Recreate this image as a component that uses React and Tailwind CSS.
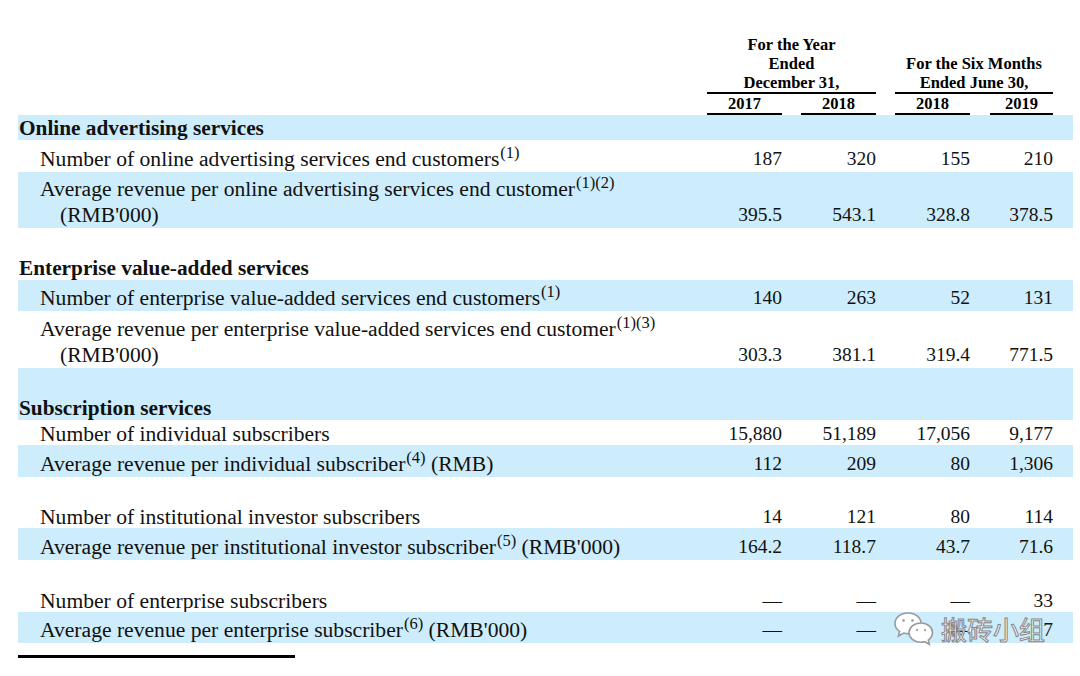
const serif = { fontFamily: '"Liberation Serif", "Times New Roman", serif' };

const Sup = ({ children }) => (
  <sup className="text-[16.5px] -top-[8px] ml-[1px]">{children}</sup>
);

const Values = ({ values }) => (
  <div className="flex text-[19.5px] pr-[20px]">
    <div className="w-[94px] text-right">{values[0]}</div>
    <div className="w-[94px] text-right">{values[1]}</div>
    <div className="w-[94px] text-right">{values[2]}</div>
    <div className="w-[83px] text-right">{values[3]}</div>
  </div>
);

const Row = ({ blue, h, children, values, bold, extra, low }) => (
  <div
    className={`relative flex items-end ${low ? "leading-[22px]" : "leading-[26px]"} ${h} ${blue ? "bg-[#cdecfc]" : "bg-white"}`}
  >
    <div
      className={`flex-1 ${bold ? "text-[21.3px] font-bold pl-[1px] leading-[24px]" : "text-[21.6px] pl-[22px]"}`}
    >
      {children}
    </div>
    {values && <Values values={values} />}
    {extra}
  </div>
);

const Header = () => (
  <div className="flex h-[115px] pt-[35px] font-bold text-[16.5px] leading-[19px] text-black">
    <div className="flex-1" />
    <div className="w-[188px] flex flex-col">
      <div className="ml-[19px] text-center">
        <div>For the Year</div>
        <div>Ended</div>
        <div>December 31,</div>
      </div>
      <div className="ml-[19px] h-[2px] bg-black" />
      <div className="flex">
        <div className="w-[94px] pl-[19px]">
          <div className="text-center">2017</div>
          <div className="h-[2px] bg-black" />
        </div>
        <div className="w-[94px] pl-[19px]">
          <div className="text-center">2018</div>
          <div className="h-[2px] bg-black" />
        </div>
      </div>
    </div>
    <div className="w-[177px] flex flex-col justify-end">
      <div className="ml-[19px] text-center">
        <div>For the Six Months</div>
        <div>Ended June 30,</div>
      </div>
      <div className="ml-[19px] h-[2px] bg-black" />
      <div className="flex">
        <div className="w-[94px] pl-[19px]">
          <div className="text-center">2018</div>
          <div className="h-[2px] bg-black" />
        </div>
        <div className="w-[83px] pl-[20px]">
          <div className="text-center">2019</div>
          <div className="h-[2px] bg-black" />
        </div>
      </div>
    </div>
    <div className="w-[20px]" />
  </div>
);

const WeChatMark = () => (
  <div className="absolute left-[875px] top-0 flex items-center gap-[6px] pointer-events-none">
    <svg width="42" height="34" viewBox="0 1 42 34">
      <path
        d="M15 2C7.3 2 2 7 2 12.5c0 3.3 1.8 6 4.6 7.9L5.4 25l5.3-3c1.3.4 2.8.6 4.3.6C22.7 22.6 28 17.9 28 12.5S22.7 2 15 2z"
        fill="#fff"
        stroke="#9a9a9a"
        strokeWidth="1.6"
      />
      <circle cx="10.5" cy="9.5" r="1.4" fill="#aaa" />
      <circle cx="19.5" cy="9.5" r="1.4" fill="#aaa" />
      <path
        d="M28 12c-7 0-12 4.4-12 9.6 0 5.2 5 9.6 12 9.6 1.3 0 2.6-.2 3.8-.5l4.6 2.6-1.1-4.1c2.5-1.8 4.2-4.5 4.2-7.6C39.5 16.4 34.7 12 28 12z"
        fill="#fff"
        stroke="#9a9a9a"
        strokeWidth="1.6"
      />
      <circle cx="24" cy="19" r="1.2" fill="#aaa" />
      <circle cx="32" cy="19" r="1.2" fill="#aaa" />
    </svg>
    <span
      className="text-[26px] leading-[30px] text-white [-webkit-text-stroke:1px_#858585]"
      style={{ fontFamily: '"Noto Sans CJK SC", sans-serif' }}
    >
      搬砖小组
    </span>
  </div>
);

export default function App() {
  return (
    <div className="w-[1080px] h-[676px] bg-white text-[#111]" style={serif}>
      <div className="ml-[18px] w-[1055px]">
        <Header />
        <Row blue bold h="h-[25px]">
          Online advertising services
        </Row>
        <Row h="h-[32px]" values={["187", "320", "155", "210"]}>
          Number of online advertising services end customers<Sup>(1)</Sup>
        </Row>
        <Row blue h="h-[56px]" values={["395.5", "543.1", "328.8", "378.5"]}>
          <div>
            Average revenue per online advertising services end customer
            <Sup>(1)(2)</Sup>
          </div>
          <div className="pl-[20px]">(RMB'000)</div>
        </Row>
        <Row bold h="h-[52px]">
          Enterprise value-added services
        </Row>
        <Row blue h="h-[31px]" values={["140", "263", "52", "131"]}>
          Number of enterprise value-added services end customers<Sup>(1)</Sup>
        </Row>
        <Row h="h-[57px]" values={["303.3", "381.1", "319.4", "771.5"]}>
          <div>
            Average revenue per enterprise value-added services end customer
            <Sup>(1)(3)</Sup>
          </div>
          <div className="pl-[20px]">(RMB'000)</div>
        </Row>
        <Row blue bold h="h-[52px]">
          Subscription services
        </Row>
        <Row h="h-[25px]" low values={["15,880", "51,189", "17,056", "9,177"]}>
          Number of individual subscribers
        </Row>
        <Row blue h="h-[32px]" values={["112", "209", "80", "1,306"]}>
          Average revenue per individual subscriber<Sup>(4)</Sup> (RMB)
        </Row>
        <Row h="h-[51px]" low values={["14", "121", "80", "114"]}>
          Number of institutional investor subscribers
        </Row>
        <Row blue h="h-[32px]" values={["164.2", "118.7", "43.7", "71.6"]}>
          Average revenue per institutional investor subscriber<Sup>(5)</Sup>{" "}
          (RMB'000)
        </Row>
        <Row h="h-[52px]" low values={["—", "—", "—", "33"]}>
          Number of enterprise subscribers
        </Row>
        <Row
          blue
          h="h-[31px]"
          values={["—", "—", "—", "7"]}
          extra={<WeChatMark />}
        >
          Average revenue per enterprise subscriber<Sup>(6)</Sup> (RMB'000)
        </Row>
        <div className="mt-[12px] h-[3px] w-[277px] bg-black" />
      </div>
    </div>
  );
}
